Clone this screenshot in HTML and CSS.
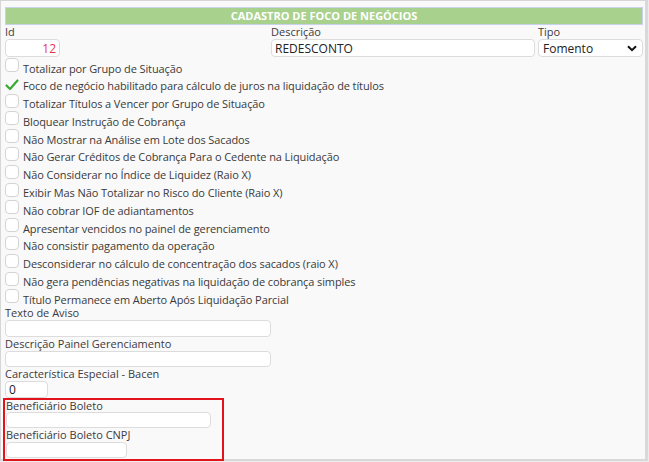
FILE: index.html
```html
<!DOCTYPE html>
<html lang="pt-BR">
<head>
    <meta charset="UTF-8">
    <meta name="viewport" content="width=device-width, initial-scale=1.0">
    <title>Cadastro de Foco de Negócios</title>
    <link rel="stylesheet" href="styles.css">
</head>
<body>

<form class="panel" id="focoForm" autocomplete="off">
    <div class="title">CADASTRO DE FOCO DE NEGÓCIOS</div>

    <div class="top-fields">
        <div class="field">
            <label for="id">Id</label>
            <input type="text" id="id" class="input input-id" value="12">
        </div>
        <div></div>
        <div class="field">
            <label for="descricao">Descrição</label>
            <input type="text" id="descricao" class="input" value="REDESCONTO">
        </div>
        <div class="field">
            <label for="tipo">Tipo</label>
            <div class="select-wrap">
                <select id="tipo" class="input select">
                    <option>Fomento</option>
                </select>
                <svg class="chevron" width="10" height="7" viewBox="0 0 10 7">
                    <path d="M1 1.2 L5 5.2 L9 1.2" fill="none" stroke="#111" stroke-width="2"/>
                </svg>
            </div>
        </div>
    </div>

    <div class="checks">
        <div class="check"><span class="box"></span><span>Totalizar por Grupo de Situação</span></div>
        <div class="check"><span class="tick"><svg width="14" height="12" viewBox="0 0 14 12"><path d="M1.5 6.5 L5 10 L12.5 1.5" fill="none" stroke="#3aa935" stroke-width="2.2" stroke-linecap="round" stroke-linejoin="round"/></svg></span><span>Foco de negócio habilitado para cálculo de juros na liquidação de títulos</span></div>
        <div class="check"><span class="box"></span><span>Totalizar Títulos a Vencer por Grupo de Situação</span></div>
        <div class="check"><span class="box"></span><span>Bloquear Instrução de Cobrança</span></div>
        <div class="check"><span class="box"></span><span>Não Mostrar na Análise em Lote dos Sacados</span></div>
        <div class="check"><span class="box"></span><span>Não Gerar Créditos de Cobrança Para o Cedente na Liquidação</span></div>
        <div class="check"><span class="box"></span><span>Não Considerar no Índice de Liquidez (Raio X)</span></div>
        <div class="check"><span class="box"></span><span>Exibir Mas Não Totalizar no Risco do Cliente (Raio X)</span></div>
        <div class="check"><span class="box"></span><span>Não cobrar IOF de adiantamentos</span></div>
        <div class="check"><span class="box"></span><span>Apresentar vencidos no painel de gerenciamento</span></div>
        <div class="check"><span class="box"></span><span>Não consistir pagamento da operação</span></div>
        <div class="check"><span class="box"></span><span>Desconsiderar no cálculo de concentração dos sacados (raio X)</span></div>
        <div class="check"><span class="box"></span><span>Não gera pendências negativas na liquidação de cobrança simples</span></div>
        <div class="check"><span class="box"></span><span>Título Permanece em Aberto Após Liquidação Parcial</span></div>
    </div>

    <div class="field">
        <label for="aviso">Texto de Aviso</label>
        <input type="text" id="aviso" class="input w-wide">
    </div>
    <div class="field">
        <label for="painel">Descrição Painel Gerenciamento</label>
        <input type="text" id="painel" class="input w-wide">
    </div>
    <div class="field">
        <label for="bacen">Característica Especial - Bacen</label>
        <input type="text" id="bacen" class="input w-small" value="0">
    </div>

    <div class="highlight">
        <div class="field">
            <label for="benef">Beneficiário Boleto</label>
            <input type="text" id="benef" class="input w-mid">
        </div>
        <div class="field">
            <label for="benefCnpj">Beneficiário Boleto CNPJ</label>
            <input type="text" id="benefCnpj" class="input w-cnpj">
        </div>
    </div>
</form>

</body>
</html>
```

FILE: styles.css
```css
body {
    font-family: "Open Sans", Arial, sans-serif;
    font-size: 11px;
    color: #3a3a3a;
    background-color: #ececec;
    margin: 0;
}

.panel {
    width: 648px;
    height: 461px;
    box-sizing: border-box;
    background-color: #f9f9f9;
    border: 1px solid #d6d6d6;
    border-right: 3px solid #d9d9d9;
    border-bottom: 2px solid #d9d9d9;
    padding: 6px 2px 0 4px;
}

.title {
    height: 18px;
    box-sizing: border-box;
    background-color: #a9d18e;
    border: 1px solid #c8d2ec;
    color: #fff;
    font-weight: bold;
    text-align: center;
    line-height: 16px;
}

.top-fields {
    display: grid;
    grid-template-columns: 55px 1fr 264px 105px;
    column-gap: 3px;
}

.field {
    display: flex;
    flex-direction: column;
    align-items: flex-start;
}

.field label {
    line-height: 14px;
    color: #3d3a40;
}

.input {
    height: 16.5px;
    box-sizing: border-box;
    border: 1px solid #dcdcdc;
    border-radius: 4px;
    background-color: #fff;
    font-family: inherit;
    font-size: 12px;
    color: #222;
    padding: 0 3px;
    margin: 0;
    outline: none;
}

.top-fields .input {
    width: 100%;
    height: 18px;
}

.input-id {
    text-align: right;
    color: #e8344e;
}

.select-wrap {
    position: relative;
    width: 100%;
}

.select {
    appearance: none;
    -webkit-appearance: none;
    padding-left: 4px;
}

.chevron {
    position: absolute;
    right: 6px;
    top: 6px;
    pointer-events: none;
}

.checks {
    display: flex;
    flex-direction: column;
}

.check {
    height: 17.8px;
    display: flex;
    align-items: flex-start;
    gap: 4px;
}

.check span:last-child {
    padding-top: 5.5px;
    line-height: 11.8px;
    letter-spacing: -0.1px;
    white-space: nowrap;
}

.box {
    width: 14px;
    height: 14px;
    box-sizing: border-box;
    margin-top: 1px;
    border: 1px solid #d4d4d4;
    border-radius: 4px;
    background-color: #fff;
    flex: none;
}

.tick {
    width: 14px;
    height: 14px;
    margin-top: 4px;
    flex: none;
}

.w-wide {
    width: 266px;
}

.w-small {
    width: 43px;
}

.w-mid {
    width: 205px;
}

.w-cnpj {
    width: 121px;
}

.highlight {
    width: 221px;
    box-sizing: border-box;
    margin-left: -2px;
    border: 2px solid #e3131b;
    padding: 0 0 1px 1px;
}

.highlight .field label {
    line-height: 12px;
}

.highlight .field + .field label {
    line-height: 14px;
}

.highlight .input {
    height: 16px;
}
```
